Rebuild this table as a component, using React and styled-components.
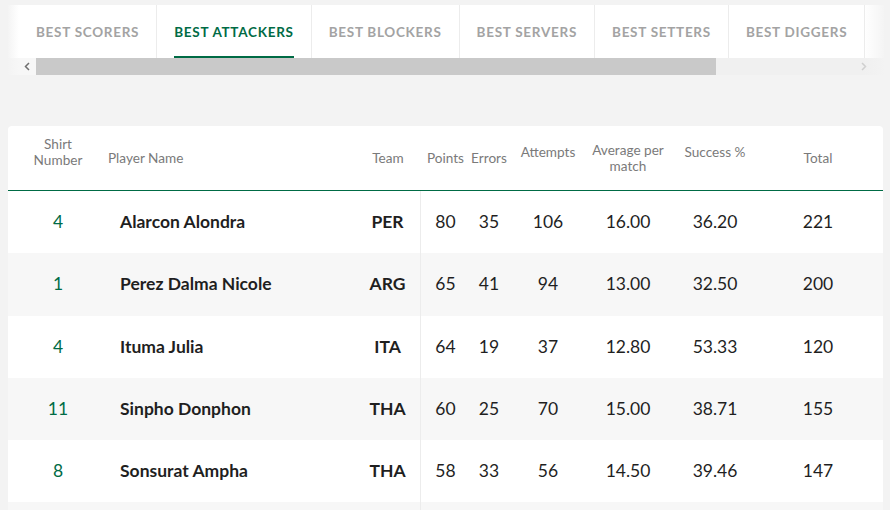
import React from 'react'
import styled, { createGlobalStyle } from 'styled-components'

const GlobalStyle = createGlobalStyle`
  body {
    margin: 0;
    background: #f3f3f3;
    font-family: Lato, "Liberation Sans", sans-serif;
  }
`

const Page = styled.div`
  padding: 5px 6px 0 8px;
`

const TabsBox = styled.div`
  position: relative;
  background: #fff;
`

const TabList = styled.div`
  display: flex;
  height: 53px;
  padding-left: 11px;
`

const Tab = styled.div`
  display: flex;
  padding: 0 17px;
  border-right: 1px solid #ececec;
`

const TabLabel = styled.div`
  display: flex;
  align-items: center;
  padding-top: 2px;
  border-bottom: 2px solid ${p => (p.active ? '#006b45' : 'transparent')};
  font-size: 13.5px;
  font-weight: 700;
  letter-spacing: 0.72px;
  text-transform: uppercase;
  color: ${p => (p.active ? '#006b45' : '#a3a3a3')};
  white-space: nowrap;
`

const Fade = styled.div`
  position: absolute;
  top: 0;
  bottom: 0;
  ${p => (p.side === 'left' ? 'left: 0;' : 'right: 0;')}
  width: ${p => (p.side === 'left' ? '11px' : '20px')};
  background: linear-gradient(
    ${p => (p.side === 'left' ? 'to left' : 'to right')},
    rgba(243, 243, 243, 0),
    rgba(243, 243, 243, 0.9)
  );
  pointer-events: none;
`

const ScrollBar = styled.div`
  display: flex;
  height: 17px;
  background: #f0f0f0;
`

const ScrollButton = styled.div`
  display: flex;
  align-items: center;
  justify-content: ${p => (p.left ? 'flex-end' : 'center')};
  padding-right: ${p => (p.left ? 6 : 0)}px;
  width: ${p => p.width}px;
  box-sizing: border-box;
  background: ${p => (p.left ? '#f7f7f7' : '#f0f0f0')};
  color: ${p => (p.left ? '#707070' : '#cfcfcf')};
`

const Thumb = styled.div`
  width: 680px;
  background: #c9c9c9;
`

const Track = styled.div`
  flex: 1;
`

const Card = styled.div`
  margin-top: 51px;
  margin-right: 1px;
  background: #fff;
  border-radius: 4px 4px 0 0;
  overflow: hidden;
`

const cols = '100px 247px 66px 49px 38px 80px 80px 94px 112px'

const HeadRow = styled.div`
  display: grid;
  grid-template-columns: ${cols};
  height: 64px;
  border-bottom: 1px solid #006b45;
`

const HeadCell = styled.div`
  display: flex;
  flex-direction: column;
  align-items: ${p => (p.left ? 'flex-start' : 'center')};
  justify-content: center;
  padding-bottom: ${p => (p.raised ? 12 : 0)}px;
  text-align: center;
  font-size: 13.6px;
  line-height: 16px;
  color: #7a7a7a;
`

const Row = styled.div`
  display: grid;
  grid-template-columns: ${cols};
  height: 62.3px;
  background: ${p => (p.striped ? '#f7f7f7' : '#fff')};
`

const Cell = styled.div`
  display: flex;
  align-items: center;
  justify-content: ${p => (p.left ? 'flex-start' : 'center')};
  padding-left: ${p => (p.left ? 12 : 0)}px;
  padding-bottom: 1px;
  font-size: 17.5px;
  font-weight: ${p => (p.bold ? 700 : 400)};
  color: ${p => p.color || '#1f1f1f'};
  ${p => p.divider && 'border-right: 1px solid #ececec;'}
`

const tabs = ['Best Scorers', 'Best Attackers', 'Best Blockers', 'Best Servers', 'Best Setters', 'Best Diggers']

const players = [
  { shirt: 4, name: 'Alarcon Alondra', team: 'PER', points: 80, errors: 35, attempts: 106, avg: '16.00', success: '36.20', total: 221 },
  { shirt: 1, name: 'Perez Dalma Nicole', team: 'ARG', points: 65, errors: 41, attempts: 94, avg: '13.00', success: '32.50', total: 200 },
  { shirt: 4, name: 'Ituma Julia', team: 'ITA', points: 64, errors: 19, attempts: 37, avg: '12.80', success: '53.33', total: 120 },
  { shirt: 11, name: 'Sinpho Donphon', team: 'THA', points: 60, errors: 25, attempts: 70, avg: '15.00', success: '38.71', total: 155 },
  { shirt: 8, name: 'Sonsurat Ampha', team: 'THA', points: 58, errors: 33, attempts: 56, avg: '14.50', success: '39.46', total: 147 },
  { shirt: '', name: '', team: '', points: '', errors: '', attempts: '', avg: '', success: '', total: '' }
]

const Chevron = ({ dir }) => (
  <svg width="6" height="9" viewBox="0 0 6 9">
    <path
      d={dir === 'left' ? 'M5 1 L1.5 4.5 L5 8' : 'M1 1 L4.5 4.5 L1 8'}
      fill="none"
      stroke="currentColor"
      strokeWidth="1.5"
    />
  </svg>
)

const App = () => (
  <Page>
    <GlobalStyle />
    <TabsBox>
      <TabList>
        {tabs.map(t => (
          <Tab key={t}>
            <TabLabel active={t === 'Best Attackers'}>{t}</TabLabel>
          </Tab>
        ))}
      </TabList>
      <ScrollBar>
        <ScrollButton left width={28}><Chevron dir="left" /></ScrollButton>
        <Thumb />
        <Track />
        <ScrollButton width={40}><Chevron dir="right" /></ScrollButton>
      </ScrollBar>
      <Fade side="left" />
      <Fade side="right" />
    </TabsBox>

    <Card>
      <HeadRow>
        <HeadCell raised><span>Shirt</span><span>Number</span></HeadCell>
        <HeadCell left>Player Name</HeadCell>
        <HeadCell>Team</HeadCell>
        <HeadCell>Points</HeadCell>
        <HeadCell>Errors</HeadCell>
        <HeadCell raised>Attempts</HeadCell>
        <HeadCell><span>Average per</span><span>match</span></HeadCell>
        <HeadCell raised>Success %</HeadCell>
        <HeadCell>Total</HeadCell>
      </HeadRow>
      {players.map((p, i) => (
        <Row key={i} striped={i % 2 === 1}>
          <Cell color="#006b45">{p.shirt}</Cell>
          <Cell left bold>{p.name}</Cell>
          <Cell bold divider>{p.team}</Cell>
          <Cell>{p.points}</Cell>
          <Cell>{p.errors}</Cell>
          <Cell>{p.attempts}</Cell>
          <Cell>{p.avg}</Cell>
          <Cell>{p.success}</Cell>
          <Cell>{p.total}</Cell>
        </Row>
      ))}
    </Card>
  </Page>
)

export default App
